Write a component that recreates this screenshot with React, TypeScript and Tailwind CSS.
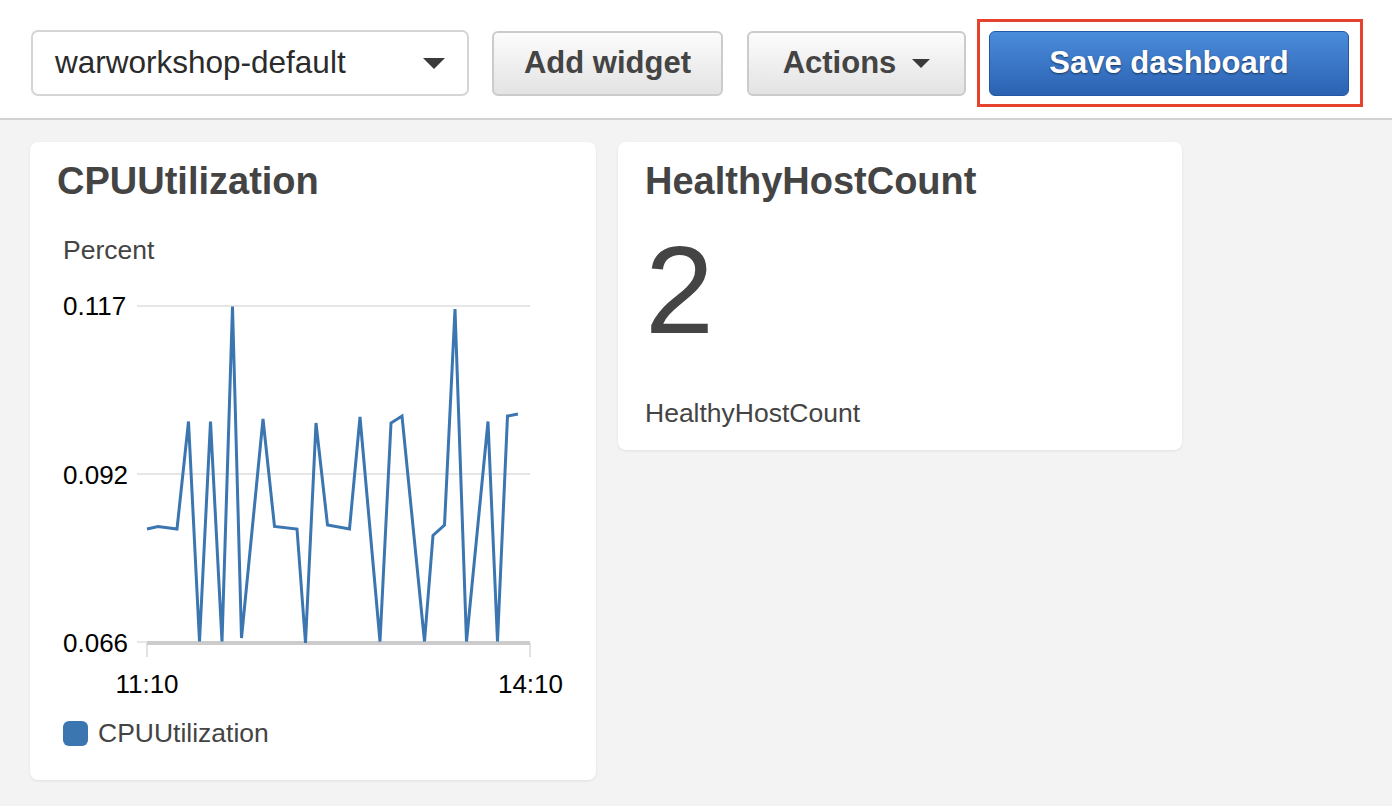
import React from "react";

const FONT = { fontFamily: '"Liberation Sans", Arial, Helvetica, sans-serif' };

// CPU samples, plotted in page coordinates (viewBox offset below)
const cpuPoints: [number, number][] = [
  [147, 529], [158, 526.5], [177, 529], [188.5, 421.5], [199.5, 641.5],
  [210.5, 421.5], [222, 641.5], [232.5, 306.5], [241.5, 638], [263, 419],
  [274.5, 526.5], [297, 529], [305.5, 643], [316, 423], [327.5, 525],
  [349.5, 529], [360, 417], [380, 641.5], [391, 423], [402, 416],
  [424.5, 641.5], [433, 535.5], [444.5, 525], [455, 309], [466.5, 641.5],
  [488, 421.5], [497.5, 641.5], [507.5, 416], [518, 414],
];

const Caret = ({ w, h }: { w: number; h: number }) => (
  <svg width={w} height={h} viewBox={`0 0 ${w} ${h}`}>
    <polygon points={`0,0 ${w},0 ${w / 2},${h}`} fill="#3a3a3a" />
  </svg>
);

const CpuChart = () => {
  const line = cpuPoints.map((p) => p.join(",")).join(" ");
  return (
    <svg width={566} height={440} viewBox="30 265 566 440" className="block">
      {/* grid */}
      <line x1={137} y1={306} x2={530} y2={306} stroke="#e6e6e6" strokeWidth={2} />
      <line x1={137} y1={474} x2={530} y2={474} stroke="#e6e6e6" strokeWidth={2} />
      <line x1={137} y1={642} x2={147} y2={642} stroke="#e6e6e6" strokeWidth={2} />
      {/* ticks */}
      <line x1={147} y1={643} x2={147} y2={657} stroke="#e2e2e2" strokeWidth={2} />
      <line x1={530} y1={643} x2={530} y2={657} stroke="#e2e2e2" strokeWidth={2} />
      {/* axis */}
      <line x1={147} y1={643} x2={530} y2={643} stroke="#cccccc" strokeWidth={4} />
      {/* series */}
      <polyline points={line} fill="none" stroke="#3b76b0" strokeWidth={3} />
      {/* labels */}
      <g fontFamily='"Liberation Sans", Arial, sans-serif' fontSize={26} fill="#000">
        <text x={63} y={315}>0.117</text>
        <text x={63} y={483.5}>0.092</text>
        <text x={63} y={652}>0.066</text>
        <text x={147} y={693} textAnchor="middle">11:10</text>
        <text x={530.5} y={693} textAnchor="middle">14:10</text>
      </g>
    </svg>
  );
};

export default function App() {
  return (
    <div style={FONT} className="w-[1392px] h-[806px] overflow-hidden bg-[#f3f3f3]">
      {/* Top bar */}
      <div className="h-[120px] bg-white border-b-2 border-[#d2d2d2] pt-[19px] pl-[31px]">
        <div className="flex items-center h-[88px]">
          <div className="w-[438px] h-[66px] flex items-center justify-between pl-[22px] pr-[22px] bg-white border-2 border-[#d5d5d5] rounded-[7px]">
            <span className="text-[31.5px] text-[#2b2b2b]">warworkshop-default</span>
            <Caret w={22} h={11} />
          </div>

          <button className="ml-[23px] w-[231px] h-[65px] flex items-center justify-center bg-linear-to-b from-[#fcfcfc] to-[#e3e3e3] border-2 border-[#cbcbcb] rounded-[6px] text-[31px] font-bold text-[#444]">
            Add widget
          </button>

          <button className="ml-[24px] w-[219px] h-[65px] flex items-center justify-center gap-[16px] bg-linear-to-b from-[#fcfcfc] to-[#e3e3e3] border-2 border-[#cbcbcb] rounded-[6px] text-[31px] font-bold text-[#444]">
            <span>Actions</span>
            <Caret w={18} h={9} />
          </button>

          <div className="ml-[11px] border-[3px] border-[#e5432e] pl-[9px] pr-[11px] pt-[9px] pb-[8px]">
            <button
              className="w-[360px] h-[65px] flex items-center justify-center bg-linear-to-b from-[#4b8cdb] to-[#2b62b2] border border-[#2356a3] rounded-[6px] text-[31px] font-bold text-white"
              style={{ textShadow: "0 1px 2px rgba(0,0,0,0.55)" }}
            >
              Save dashboard
            </button>
          </div>
        </div>
      </div>

      {/* Widgets */}
      <div className="flex items-start gap-[22px] pt-[22px] pl-[30px]">
        <div className="w-[566px] h-[638px] bg-white rounded-[8px] shadow-[0_1px_3px_rgba(0,0,0,0.08)] pt-[18px]">
          <h2 className="pl-[27px] text-[38px] leading-[43px] font-bold text-[#444]">CPUUtilization</h2>
          <div className="mt-[32px] pl-[33px] text-[26.5px] leading-[30px] text-[#444]">Percent</div>
          <CpuChart />
          <div className="mt-[13px] pl-[33px] flex items-center gap-[10px]">
            <span className="w-[25px] h-[25px] rounded-[6px] bg-[#3b76b0]" />
            <span className="text-[26.5px] leading-[30px] text-[#444]">CPUUtilization</span>
          </div>
        </div>

        <div className="w-[564px] h-[308px] bg-white rounded-[8px] shadow-[0_1px_3px_rgba(0,0,0,0.08)] pt-[18px] pb-[22px] pl-[27px] flex flex-col">
          <h2 className="text-[38px] leading-[43px] font-bold text-[#444]">HealthyHostCount</h2>
          <div className="mt-[25px] text-[124px] leading-none text-[#444] tracking-[-4px]">2</div>
          <div className="mt-auto text-[26.5px] leading-[30px] text-[#444]">HealthyHostCount</div>
        </div>
      </div>
    </div>
  );
}
